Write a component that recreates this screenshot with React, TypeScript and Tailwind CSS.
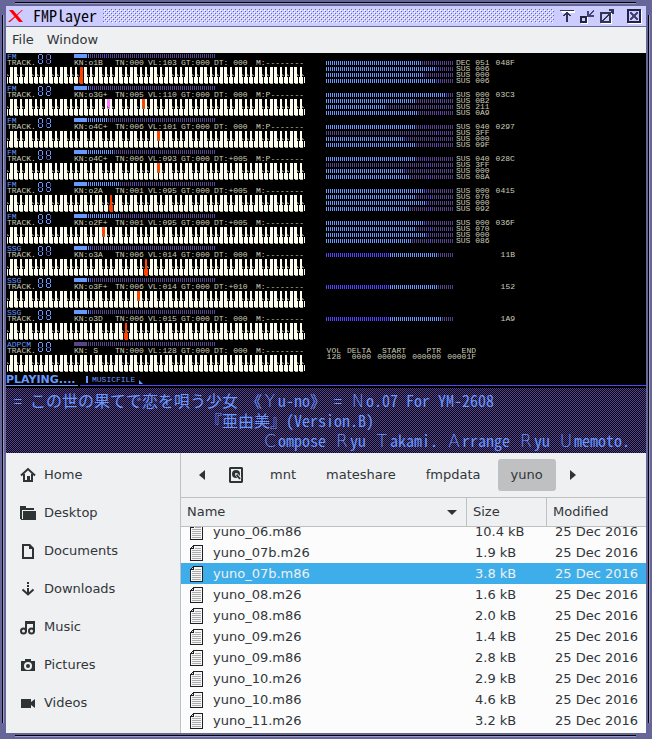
import type { ReactNode } from "react";

type Slot = { lit: number; peak: number; state: string };
type Track = {
  kind: string;
  digit: string;
  meter: { lit: number; peak: number; solid?: boolean };
  fields: string[];
  keys: { octave: number; note: string; color: string }[];
  slots?: Slot[];
  freq?: string;
  level?: number;
};

const BRIGHT = "#6699ff";
const DIM = "#554488";
const PEAK = "#5544ff";
const ORANGE = "#ff4400";
const PINK = "#ff77ff";

const sus = (lit: number, peak: number, value: string, state = "SUS"): Slot => ({ lit, peak, state: `${state} ${value}` });

const tracks: Track[] = [
  {
    kind: "FM", digit: "1", meter: { lit: 1, peak: 8 },
    fields: ["KN:o1B", "TN:000", "VL:103", "GT:000", "DT: 000", "M:--------"],
    keys: [{ octave: 1, note: "B", color: ORANGE }],
    slots: [sus(48, 54, "051", "DEC"), sus(55, 56, "006"), sus(49, 49, "000"), sus(55, 56, "006")], freq: "048F",
  },
  {
    kind: "FM", digit: "2", meter: { lit: 1, peak: 2 },
    fields: ["KN:o3G+", "TN:005", "VL:110", "GT:000", "DT: 000", "M:P-------"],
    keys: [{ octave: 2, note: "G+", color: PINK }, { octave: 3, note: "G+", color: ORANGE }],
    slots: [sus(60, 60, "000"), sus(45, 57, "0B2"), sus(30, -1, "211"), sus(46, 57, "0A9")], freq: "03C3",
  },
  {
    kind: "FM", digit: "3", meter: { lit: 10, peak: 32 },
    fields: ["KN:o4C+", "TN:006", "VL:101", "GT:000", "DT: 000", "M:P-------"],
    keys: [{ octave: 4, note: "C+", color: ORANGE }],
    slots: [sus(45, 49, "040"), sus(0, 55, "3FF"), sus(39, 39, "000"), sus(45, 55, "09F")], freq: "0297",
  },
  {
    kind: "FM", digit: "4", meter: { lit: 13, peak: 32 },
    fields: ["KN:o4C+", "TN:006", "VL:093", "GT:000", "DT:+005", "M:P-------"],
    keys: [{ octave: 4, note: "C+", color: ORANGE }],
    slots: [sus(45, 49, "040"), sus(0, 51, "3FF"), sus(39, 39, "000"), sus(42, 51, "08A")], freq: "028C",
  },
  {
    kind: "FM", digit: "5", meter: { lit: 16, peak: 23 },
    fields: ["KN:o2A", "TN:001", "VL:095", "GT:000", "DT:+005", "M:--------"],
    keys: [{ octave: 2, note: "A", color: ORANGE }],
    slots: [sus(49, 49, "000"), sus(45, 52, "070"), sus(50, 50, "000"), sus(42, 52, "092")], freq: "0415",
  },
  {
    kind: "FM", digit: "6", meter: { lit: 16, peak: 23 },
    fields: ["KN:o2F+", "TN:001", "VL:095", "GT:000", "DT:+005", "M:--------"],
    keys: [{ octave: 2, note: "F+", color: ORANGE }],
    slots: [sus(49, 49, "000"), sus(45, 52, "070"), sus(50, 50, "000"), sus(43, 52, "086")], freq: "036F",
  },
  {
    kind: "SSG", digit: "7", meter: { lit: 1, peak: 1 },
    fields: ["KN:o3A", "TN:006", "VL:014", "GT:000", "DT: 000", "M:--------"],
    keys: [{ octave: 3, note: "A", color: ORANGE }], level: 56, freq: "11B",
  },
  {
    kind: "SSG", digit: "8", meter: { lit: 1, peak: 1 },
    fields: ["KN:o3F+", "TN:006", "VL:014", "GT:000", "DT:+010", "M:--------"],
    keys: [{ octave: 3, note: "F+", color: ORANGE }], level: 56, freq: "152",
  },
  {
    kind: "SSG", digit: "9", meter: { lit: 1, peak: 1 },
    fields: ["KN:o3D", "TN:006", "VL:015", "GT:000", "DT: 000", "M:--------"],
    keys: [{ octave: 3, note: "D", color: ORANGE }], level: 58, freq: "1A9",
  },
  {
    kind: "ADPCM", digit: "0", meter: { lit: 0, peak: -1, solid: false },
    fields: ["KN: S", "TN:000", "VL:128", "GT:000", "DT: 000", "M:--------"],
    keys: [],
  },
];

const adpcm = [
  ["VOL", "DELTA", "START", "PTR", "END"],
  ["128", "0000", "000000", "000000", "00001F"],
];

const places = ["Home", "Desktop", "Documents", "Downloads", "Music", "Pictures", "Videos"];

const files = [
  ["yuno_06.m86", "10.4 kB"],
  ["yuno_07b.m26", "1.9 kB"],
  ["yuno_07b.m86", "3.8 kB"],
  ["yuno_08.m26", "1.6 kB"],
  ["yuno_08.m86", "2.0 kB"],
  ["yuno_09.m26", "1.4 kB"],
  ["yuno_09.m86", "2.8 kB"],
  ["yuno_10.m26", "2.9 kB"],
  ["yuno_10.m86", "4.6 kB"],
  ["yuno_11.m26", "3.2 kB"],
];

/* 64 one-pixel ticks; the colour of each comes from its index */
function Ticks({ x = 0, color }: { x?: number; color: (i: number) => string }) {
  return (
    <>
      {Array.from({ length: 64 }, (_, i) => (
        <rect key={i} x={x + i * 2} y="0" width="1" height="4" fill={color(i)} />
      ))}
    </>
  );
}

function Bar({ color }: { color: (i: number) => string }) {
  return (
    <svg width="128" height="4" shapeRendering="crispEdges" aria-hidden="true" className="block">
      <Ticks color={color} />
    </svg>
  );
}

const NOTES = ["C", "D", "E", "F", "G", "A", "B"];

function Piano({ keys }: { keys: Track["keys"] }) {
  const whites = Array.from({ length: 61 }, (_, i) => ({ x: -3 + i * 5, n: (i + 5) % 7, o: Math.floor((i + 5) / 7) - 1 }));
  const lit = (o: number, note: string) => keys.find((k) => k.octave === o && k.note === note)?.color;
  return (
    <svg width="298" height="17" shapeRendering="crispEdges" aria-hidden="true" className="block">
      {whites.map((w) => (
        <g key={w.x}>
          <rect x={w.x} y="0" width="4" height="17" fill={lit(w.o, NOTES[w.n]) ?? "#fffff0"} />
          <rect x={w.x} y="16" width="1" height="1" fill="#000" />
          <rect x={w.x + 1} y="16" width="3" height="1" fill={lit(w.o, NOTES[w.n]) ?? "#bbbbaa"} />
        </g>
      ))}
      {whites
        .filter((w) => w.n !== 2 && w.n !== 6)
        .map((w) => {
          const c = lit(w.o, `${NOTES[w.n]}+`);
          return (
            <g key={w.x}>
              <rect x={w.x + 3} y="0" width="3" height="10" fill={c ?? "#000"} />
              <path d={`M${w.x + 3} 7h1v1h1v1h-2z`} fill="#77776e" />
            </g>
          );
        })}
    </svg>
  );
}

/* segment order: top, upper right, lower right, bottom, lower left, upper left, middle */
const SEGMENTS: Record<string, string> = {
  "0": "1111110", "1": "0110000", "2": "1101101", "3": "1111001", "4": "0110011",
  "5": "1011011", "6": "1011111", "7": "1110010", "8": "1111111", "9": "1111011",
};
const SEGMENT_PATHS = ["M1 0h3v1h-3z", "M4 1h1v4h-1z", "M4 6h1v3h-1z", "M1 9h3v1h-3z", "M0 6h1v3h-1z", "M0 1h1v4h-1z", "M1 5h3v1h-3z"];

function Digit({ value }: { value: string }) {
  return (
    <svg width="6" height="11" shapeRendering="crispEdges" aria-hidden="true">
      {SEGMENT_PATHS.map((d, i) => (
        <path key={d} d={d} fill={SEGMENTS[value][i] === "1" ? BRIGHT : DIM} />
      ))}
    </svg>
  );
}

function TrackLeft({ track }: { track: Track }) {
  const { meter } = track;
  return (
    <div className="pl-px">
      <div className="flex h-[14px] pt-px">
        <div className="w-[31px] leading-[6px]">
          <div className="text-[#6699ff]">{track.kind}</div>
          <div>TRACK.</div>
        </div>
        <div className="flex w-9 gap-[2px]">
          <Digit value="0" />
          <Digit value={track.digit} />
        </div>
        <div>
          <svg width="142" height="4" shapeRendering="crispEdges" aria-hidden="true" className="block">
            <rect width="13" height="4" fill={meter.solid === false ? DIM : BRIGHT} />
            <Ticks x={14} color={(i) => (i === meter.peak ? PEAK : i < meter.lit ? BRIGHT : DIM)} />
          </svg>
          <div className="mt-[2px] grid grid-cols-[41px_33px_33px_33px_42px_50px] whitespace-pre leading-[6px]">
            {track.fields.map((f) => (
              <span key={f}>{f}</span>
            ))}
          </div>
        </div>
      </div>
      <Piano keys={track.keys} />
    </div>
  );
}

function TrackRight({ track }: { track: Track }) {
  if (track.slots) {
    return (
      <div className="flex gap-[6px] pt-[7px] leading-[6px]">
        <div>
          {track.slots.map((s, i) => (
            <div key={i} className="flex items-center gap-[2px] whitespace-pre">
              <Bar color={(t) => (t === s.peak ? PEAK : t < s.lit ? BRIGHT : DIM)} />
              <span>{s.state}</span>
            </div>
          ))}
        </div>
        <span>{track.freq}</span>
      </div>
    );
  }
  if (track.level) {
    const level = track.level;
    return (
      <div className="flex items-center self-start pt-[7px] leading-[6px]">
        <Bar color={(t) => (t < 32 ? PEAK : t < level ? BRIGHT : DIM)} />
        <span className="w-[61px] text-right">{track.freq}</span>
      </div>
    );
  }
  return (
    <table className="mt-[7px] w-[150px] table-fixed border-collapse self-start justify-self-start text-right leading-[6px]">
      <thead>
        <tr>
          {adpcm[0].map((c, i) => (
            <th key={c} scope="col" className={`p-0 text-right font-normal ${i === 0 ? "w-[15px]" : i === 1 ? "w-[30px]" : "w-[35px]"}`}>{c}</th>
          ))}
        </tr>
      </thead>
      <tbody>
        <tr>
          {adpcm[1].map((c, i) => (
            <td key={i} className="p-0">{c}</td>
          ))}
        </tr>
      </tbody>
    </table>
  );
}

/* full-width capital inside the half-width song text */
function Wide({ children }: { children: ReactNode }) {
  return <span className="inline-block w-4 text-center font-['DejaVu_Sans_Light','DejaVu_Sans',sans-serif] text-[17px] font-extralight leading-4">{children}</span>;
}

function PlaceIcon({ name }: { name: string }) {
  const shapes: Record<string, ReactNode> = {
    Home: (
      <>
        <path d="M1 8.5 8 2l7 6.500" fill="none" stroke="currentColor" strokeWidth="2" />
        <path d="M7 9h3v5H7z" />
        <path d="M4 7v7h8V7" fill="none" stroke="currentColor" strokeWidth="2" />
      </>
    ),
    Desktop: (
      <>
        <path d="M0 1h6v2h8v2H2v9H0z" />
        <path d="M3 6h13v9H3z" />
        <path d="M1 14h3v1H1z" />
      </>
    ),
    Documents: <path d="M2 1h8l4 4v11H2zM4 3v11h8V6H9V3z" fillRule="evenodd" />,
    Downloads: (
      <>
        <path d="M7 1h2v2H7zM7 4h2v2H7zM7 7h2v5H7z" />
        <path d="m2.500 8.500 5.500 5 5.500-5" fill="none" stroke="currentColor" strokeWidth="2" />
      </>
    ),
    Music: (
      <>
        <path d="M5 2h10v11h-2V5H7v8H5z" />
        <circle cx="3.500" cy="12" r="2.500" fill="none" stroke="currentColor" strokeWidth="2" />
        <circle cx="11.500" cy="12" r="2.500" fill="none" stroke="currentColor" strokeWidth="2" />
      </>
    ),
    Pictures: (
      <>
        <path d="M5 2h6v2h4v10H1V4h4zM8 5a4 4 0 1 0 0 8 4 4 0 0 0 0-8z" fillRule="evenodd" />
        <circle cx="8" cy="9" r="2" />
      </>
    ),
    Videos: <path d="M1 4h10v3l4-3v9l-4-3v3H1z" />,
  };
  return (
    <svg width="16" height="16" viewBox="0 0 16 16" fill="currentColor" aria-hidden="true" className="text-[#2e3436]">
      {shapes[name]}
    </svg>
  );
}

function FileIcon() {
  return (
    <svg width="14" height="16" viewBox="0 0 14 16" shapeRendering="crispEdges" aria-hidden="true" className="block shrink-0">
      <path d="M3 0h10v16H0V3h1V2h1V1h1z" fill="#1d1f21" />
      <path d="M4 1h8v14H1V4h3z" fill="#f7f7f7" />
      <path d="M2 2h1v1H2z" fill="#e0e0e0" />
      <path d="M5 3h6M2 5h9M2 7h9M2 9h9M2 11h9M2 13h9" stroke="#a8aaac" transform="translate(0 .5)" />
    </svg>
  );
}

function TitleButton({ label, children, className = "" }: { label: string; children: ReactNode; className?: string }) {
  return (
    <button type="button" aria-label={label} className={`block ${className}`}>
      <svg width="16" height="16" shapeRendering="crispEdges" aria-hidden="true" className="block">{children}</svg>
    </button>
  );
}

function TitleBar() {
  return (
    <header className="flex h-[21px] items-center border-b border-[#666699] bg-[#ccccff] pl-[2px] pr-1">
      <svg width="16" height="12" viewBox="0 0 16 12" aria-hidden="true">
        <path d="M1 0h4l10 12h-4z" fill="#ff0000" />
        <path d="M14 0h1L2 12H0z" fill="#ff0000" />
      </svg>
      <h1 className="ml-[9px] w-[70px] self-start font-['Noto_Sans_Mono_CJK_JP','DejaVu_Sans_Mono',monospace] text-[16px] leading-[18px] text-black">FMPlayer</h1>
      <div className="h-[14px] flex-1 [background-image:conic-gradient(from_0deg_at_1px_1px,transparent_75%,#666699_0),conic-gradient(from_0deg_at_1px_1px,transparent_75%,#666699_0),conic-gradient(from_0deg_at_1px_1px,transparent_75%,#ffffff_0),conic-gradient(from_0deg_at_1px_1px,transparent_75%,#ffffff_0)] [background-position:0_0,2px_2px,1px_1px,3px_3px] [background-size:4px_4px]" />
      <div className="ml-[6px] flex items-center gap-1">
        <TitleButton label="Shade">
          <path d="M1 3h14v2H2z" fill="#fff" />
          <path d="M0 2h14v1H0zM6 4h2v10H6zM5 5h4v1H5zM4 6h2v1H4zM8 6h2v1H8zM3 7h2v1H3zM9 7h2v1H9z" fill="#333355" />
        </TitleButton>
        <TitleButton label="Minimize">
          <path d="M1 9h7v7H1z" fill="#fff" />
          <path d="M0 8h7v7H0z" fill="#222244" />
          <path d="M2 10h3v3H2z" fill="#ccccff" />
          <path d="M7 3h2v4h5v2H7zM9 6h1v1H9zM10 5h1v1h-1zM10 6h1v1h-1zM11 4h1v2h-1zM12 3h1v2h-1zM13 2h1v2h-1z" fill="#444477" />
        </TitleButton>
        <TitleButton label="Maximize">
          <path d="M1 5h11v11H1z" fill="#fff" />
          <path d="M0 4h11v11H0z" fill="#333355" />
          <path d="M2 6h7v7H2z" fill="#ccccff" />
          <path d="M2 12h2v1H2zM3 11h2v1H3zM4 10h2v1H4zM5 9h2v1H5zM6 8h2v1H6zM7 7h2v1H7zM8 6h2v1H8zM9 5h2v1H9zM10 4h2v1h-2zM11 3h2v1h-2zM9 1h5v5h-2V3H9z" fill="#333355" />
        </TitleButton>
        <TitleButton label="Close" className="ml-[6px]">
          <path d="M2 2h14v14H2z" fill="#fff" />
          <path d="M1 1h14v14H1z" fill="#222244" />
          <path d="M3 3h10v10H3z" fill="#ccccff" />
          <path d="M4 4h2v1h1v1h2V5h1V4h2v2h-1v1h-1v2h1v1h1v2h-2v-1H9v-1H7v1H6v1H4v-2h1V9h1V7H5V6H4z" fill="#444477" />
        </TitleButton>
      </div>
    </header>
  );
}

function Display() {
  return (
    <section aria-label="Player display" className="overflow-hidden bg-black">
      <div className="font-['Liberation_Mono',monospace] text-[8px] text-[#ccccb8]">
        {tracks.map((t, i) => (
          <div key={i} className="grid h-8 grid-cols-2">
            <TrackLeft track={t} />
            <TrackRight track={t} />
          </div>
        ))}
      </div>
      <div className="flex h-[13px] gap-[2px] text-[#6699ff]">
        <div className="w-[72px] border-b border-[#6699ff] pt-[2px] font-['DejaVu_Sans',sans-serif] text-[11px] font-bold leading-[10px]">PLAYING....</div>
        <div className="flex flex-1 items-center gap-1 border-b border-[#5544ff] pl-[6px] pt-px font-['Liberation_Mono',monospace] text-[8px] leading-[10px]">
          <span className="h-[7px] w-[2px] bg-[#6699ff]" />
          <span>MUSICFILE</span>
          <svg width="4" height="4" aria-hidden="true" className="mt-1"><path d="M0 0v4h4z" fill="#6699ff" /></svg>
        </div>
      </div>
      <div className="mt-[2px] whitespace-pre bg-[#080418] pb-[3px] pt-[2px] font-['Noto_Sans_Mono_CJK_JP','Noto_Sans_CJK_JP',monospace] text-[16px] leading-5 text-[#6699ff] [background-image:conic-gradient(from_0deg_at_1px_1px,transparent_75%,#554488_0),conic-gradient(from_0deg_at_1px_1px,transparent_75%,#554488_0)] [background-position:0_0,1px_1px] [background-size:2px_2px]">
        <p className="h-5 pl-2">= この世の果てで恋を唄う少女 《<Wide>Y</Wide>u-no》 = <Wide>N</Wide>o.07 For YM-2608</p>
        <p className="h-5 pl-[200px]">『亜由美』(Version.B)</p>
        <p className="h-5 pr-4 text-right">
          <Wide>C</Wide>ompose <Wide>R</Wide>yu <Wide>T</Wide>akami. <Wide>A</Wide>rrange <Wide>R</Wide>yu <Wide>U</Wide>memoto.
        </p>
      </div>
    </section>
  );
}

function Chooser() {
  return (
    <main className="flex flex-1">
      <nav aria-label="Places" className="w-[175px] shrink-0 border-r border-[#bfc0c1] pt-[3px]">
        {places.map((p) => (
          <a key={p} href={`#${p}`} className="flex h-[38px] items-center gap-2 pl-[14px]">
            <PlaceIcon name={p} />
            <span>{p}</span>
          </a>
        ))}
      </nav>
      <div className="flex min-w-0 flex-1 flex-col">
        <div className="flex h-11 items-center">
          <button type="button" aria-label="Back" className="ml-[15px] flex w-[18px] justify-start pl-[3px]">
            <svg width="6" height="10" aria-hidden="true"><path d="M6 0v10L0 5z" fill="#2e3436" /></svg>
          </button>
          <button type="button" aria-label="File system root" className="ml-[15px] flex h-8 items-center">
            <svg width="14" height="16" viewBox="0 0 14 16" aria-hidden="true">
              <path d="M1 0h12l1 1v14l-1 1H1l-1-1V1zM2 2v12h10V2z" fill="#2e3436" fillRule="evenodd" />
              <circle cx="7" cy="7" r="4" fill="#2e3436" />
              <path d="m7 7 4.500 5" stroke="#eff0f1" strokeWidth="3" />
              <path d="m7 7 4 5" stroke="#2e3436" strokeWidth="2" />
              <circle cx="7" cy="7" r="1" fill="#eff0f1" />
            </svg>
          </button>
          <button type="button" className="ml-[14px] h-8 px-[13px]">mnt</button>
          <button type="button" className="ml-1 h-8 px-[13px]">mateshare</button>
          <button type="button" className="ml-1 h-8 px-[13px]">fmpdata</button>
          <button type="button" aria-pressed="true" className="ml-1 h-8 rounded-[3px] bg-[#bfc0c1] px-[13px]">yuno</button>
          <button type="button" aria-label="Forward" className="ml-[14px]">
            <svg width="6" height="10" aria-hidden="true"><path d="M0 0v10l6-5z" fill="#2e3436" /></svg>
          </button>
        </div>
        <div className="grid h-[30px] grid-cols-[1fr_80px_100px] border-y border-[#bfc0c1]">
          <button type="button" className="flex items-center justify-between pl-[6px] pr-[9px]">
            <span>Name</span>
            <svg width="10" height="5" aria-hidden="true"><path d="M0 0h10L5 5z" fill="#2e3436" /></svg>
          </button>
          <button type="button" className="border-l border-[#bfc0c1] pl-[6px] text-left">Size</button>
          <button type="button" className="border-l border-[#bfc0c1] pl-[6px] text-left">Modified</button>
        </div>
        <div className="flex-1 overflow-hidden bg-[#fcfcfc] pb-[2px]">
          <table aria-label="Files" className="-mt-1.5 w-full table-fixed border-collapse">
            <colgroup>
              <col />
              <col className="w-[80px]" />
              <col className="w-[100px]" />
            </colgroup>
            <tbody>
              {files.map(([name, size]) => (
                <tr key={name} className={name === "yuno_07b.m86" ? "h-[21px] bg-[#3daee9] text-[#eff0f1]" : "h-[21px]"}>
                  <td className="p-0 pl-[9px]">
                    <div className="flex items-center gap-[9px]">
                      <FileIcon />
                      <span>{name}</span>
                    </div>
                  </td>
                  <td className="p-0 pl-[9px]">{size}</td>
                  <td className="whitespace-nowrap p-0 pl-[9px]">25 Dec 2016</td>
                </tr>
              ))}
            </tbody>
          </table>
        </div>
      </div>
    </main>
  );
}

export default function App() {
  return (
    <div className="relative flex min-h-screen w-full flex-col border-[6px] border-[#666699] bg-[#eff0f1] font-['DejaVu_Sans',sans-serif] text-[13px] leading-4 text-[#31363b]">
      <div aria-hidden="true" className="absolute -top-1 left-[9px] right-[10px] h-[2px] border-b border-[#9999cc] bg-black" />
      <div aria-hidden="true" className="absolute -bottom-1 left-[9px] right-[10px] h-[2px] border-b border-[#9999cc] bg-black" />
      <div aria-hidden="true" className="absolute -left-1 bottom-[10px] top-[9px] w-[2px] border-r border-[#9999cc] bg-black" />
      <div aria-hidden="true" className="absolute -right-1 bottom-[10px] top-[9px] w-[2px] border-r border-[#9999cc] bg-black" />
      <TitleBar />
      <nav aria-label="Menu" className="flex h-[26px] items-center gap-[13px] pl-[6px]">
        <button type="button">File</button>
        <button type="button">Window</button>
      </nav>
      <Display />
      <Chooser />
    </div>
  );
}
